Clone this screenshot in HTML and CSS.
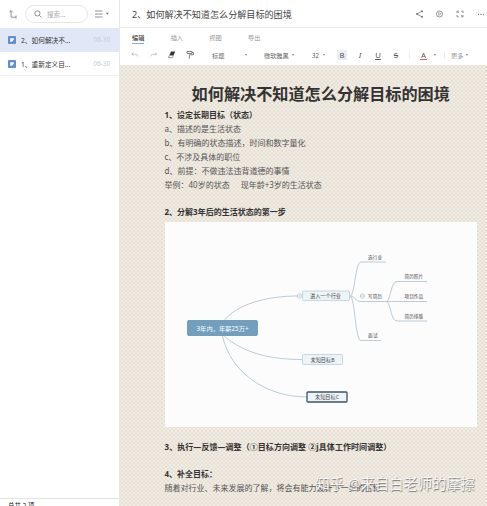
FILE: index.html
```html
<!DOCTYPE html>
<html>
<head>
<meta charset="utf-8">
<title>如何解决不知道怎么分解目标的困境</title>
<link rel="stylesheet" href="styles.css">
</head>
<body>
<div class="app">
  <aside class="sidebar">
    <div class="side-top">
      <svg class="tree" width="8" height="9" viewBox="0 0 8 9"><path d="M.4 2.2 2 .6l1.6 1.6M2 .8v6.4h5M7 5.6v3"/></svg>
      <div class="search">
        <svg width="8" height="8" viewBox="0 0 8 8"><circle cx="3.4" cy="3.4" r="2.6"/><path d="M5.4 5.4 7.4 7.4"/></svg>
        <span>搜索...</span>
      </div>
      <svg class="list" width="15" height="8" viewBox="0 0 15 8"><path d="M0 1h7.5M0 4h7.5M0 7h7.5"/><path class="fill" d="M10.8 2.8h3l-1.5 2z"/></svg>
    </div>
    <div class="note selected"><svg width="8" height="8" viewBox="0 0 8 8"><rect width="8" height="8" rx="1"/><path d="M2.2 2.2h3.6v1.5L4 5.8H2.2z"/></svg><span class="name">2、如何解决不...</span><span class="date">06-30</span></div>
    <div class="note"><svg width="8" height="8" viewBox="0 0 8 8"><rect width="8" height="8" rx="1"/><path d="M2.2 2.2h3.6v1.5L4 5.8H2.2z"/></svg><span class="name">1、重新定义目...</span><span class="date">06-30</span></div>
    <div class="total"><span>总共 2 项</span></div>
  </aside>
  <main class="editor">
    <header class="title-bar">
      <span class="doc-name">2、如何解决不知道怎么分解目标的困境</span>
      <svg class="actions" width="72" height="10" viewBox="0 0 72 10">
        <path d="M7 2.2 2 5l5 2.800"/><circle class="dot" cx="7" cy="2.2" r="1"/><circle class="dot" cx="2" cy="5" r="1"/><circle class="dot" cx="7" cy="7.8" r="1"/>
        <circle cx="24.500" cy="5" r="3"/><path class="thin" d="m23.600 3.500 2.500 1.500-2.500 1.500z"/>
        <path d="M42 4V2.200h1.800M46.200 2.200H48V4M48 6v1.800h-1.800M43.800 7.800H42V6M42.300 2.500l1.600 1.600M46.100 5.900l1.600 1.600"/>
        <circle class="dot" cx="63.500" cy="5.500" r=".65"/><circle class="dot" cx="66" cy="5.500" r=".65"/><circle class="dot" cx="68.500" cy="5.500" r=".65"/>
      </svg>
    </header>
    <nav class="tabs"><span class="active">编辑</span><span>插入</span><span>视图</span><span>导出</span></nav>
    <div class="toolbar">
      <svg class="tools" width="64" height="10" viewBox="0 0 64 10">
        <g class="pale"><path d="M2.500 2.500.7 4.200l2 1.300M.9 4.200h3.600q2 0 2.200 2.200M24 2.500l1.800 1.700-2 1.300M25.600 4.200H22q-2 0-2.200 2.200"/></g>
        <path class="dark" d="M40 1.500h4.200L42.500 5.500h-4.200z"/><path class="outline" d="m38.300 5.500-.9 2.200h3.800l1.300-2.200"/>
        <path class="mid" d="M56 1.500h5v2h-5zM61 2.500h1.400v2.300h-4v3.800"/>
      </svg>
      <span class="style">标题</span><i class="caret c1"></i>
      <span class="family">微软雅黑</span><i class="caret c2"></i>
      <span class="size">32</span><i class="caret c3"></i>
      <span class="fmt bold">B</span><span class="fmt italic">I</span><span class="fmt under">U</span><span class="fmt strike">S</span>
      <i class="divider"></i><span class="fmt color">A</span><i class="caret c4"></i><i class="divider d2"></i>
      <span class="more">更多</span><i class="caret c5"></i>
    </div>
    <article class="page">
      <h1>如何解决不知道怎么分解目标的困境</h1>
      <h2>1、设定长期目标（状态）</h2>
      <p>a、描述的是生活状态</p>
      <p>b、有明确的状态描述，时间和数字量化</p>
      <p>c、不涉及具体的职位</p>
      <p>d、前提：不做违法违背道德的事情</p>
      <p>举例：40岁的状态<span class="gap"></span>现年龄+3岁的生活状态</p>
      <h2 class="spaced">2、分解3年后的生活状态的第一步</h2>
      <svg class="map" width="312" height="205" viewBox="165 222 312 205">
        <g class="wire">
          <path d="M223 322C236 304 267 296 298 296M222 334C242 353 270 359.500 302 359.500M222 334C230 374 268 397 307 397"/>
          <path d="M350 296C355 296 355 262 361 262H386M350 296C355 296 355 301.500 361 301.500H387M350 296C355 296 355 340.500 361 340.500H381"/>
          <path d="M387 301.500C391 298 391 281.500 397 281.500H427M387 301.500H427M387 301.500C391 305 391 321 397 321H427"/>
        </g>
        <rect class="root" x="187" y="320" width="71" height="16" rx="2"/>
        <rect class="node" x="302.500" y="291" width="47" height="9.500" rx="1"/>
        <rect class="node" x="302.500" y="354.500" width="40" height="10" rx="1"/>
        <rect class="node current" x="307" y="392" width="40" height="10" rx="1"/>
        <circle class="knob" cx="299.500" cy="296" r="2.200"/><circle class="knob" cx="362.500" cy="296" r="2.200"/><path class="minus" d="M361.200 296h2.600M298.400 296h2.200"/>
        <text class="root-text" x="196.500" y="330.500" textLength="52">3年内，年薪25万+</text>
        <text x="310" y="298.200" textLength="31">进入一个行业</text>
        <text x="310.500" y="361.800" textLength="24">未知目标B</text>
        <text x="315" y="399.300" textLength="24">未知目标C</text>
        <g class="leaf">
          <text x="368" y="258.600" textLength="14">选行业</text><text x="368" y="298" textLength="14">写简历</text><text x="368" y="337.400" textLength="9.500">面试</text>
          <text x="404.500" y="278.200" textLength="18.500">简历照片</text><text x="404.500" y="297.800" textLength="18.500">项目作品</text><text x="404.500" y="317.600" textLength="18.500">简历排版</text>
        </g>
      </svg>
      <h2 class="after">3、执行—反馈—调整（①目标方向调整 ②j具体工作时间调整）</h2>
      <h2 class="last">4、补全目标：</h2>
      <p>随着对行业、未来发展的了解，将会有能力设计下一步的目标</p>
    </article>
    <div class="watermark">知乎 @来自白老师的摩擦</div>
  </main>
</div>
</body>
</html>
```
FILE: styles.css
```css
* { box-sizing: border-box; }
body { margin: 0; font-family: "Noto Sans", "Noto Sans CJK SC", sans-serif; color: #444; background: #fff; }
svg { display: block; flex: none; fill: none; stroke: #777; stroke-width: .8; }
.app { display: flex; width: 487px; height: 506px; overflow: hidden; }
.sidebar { display: flex; flex-direction: column; flex: none; width: 119px; background: #fff; }
.side-top { display: flex; align-items: center; flex: none; height: 28px; padding-left: 9px; }
.search { display: flex; align-items: center; gap: 5px; width: 63px; height: 18px; margin-left: 8px; padding-left: 8px; border: 1px solid #e6e6e6; border-radius: 9px; font-size: 6.5px; color: #aaa; }
.list { margin-left: 7px; }
.list .fill { fill: #777; stroke: none; }
.note { display: flex; align-items: center; flex: none; height: 24px; padding: 0 9px 0 8px; border-bottom: 1px solid #eee; font-size: 6.7px; color: #333; }
.note svg { stroke: none; }
.note rect { fill: #5c8fd6; }
.note path { fill: #fff; }
.note.selected { background: #e0e8f8; border-color: #e0e8f8; }
.name { margin-left: 5px; white-space: nowrap; }
.date { margin-left: auto; font-size: 6.3px; color: #c6cad2; }
.total { height: 8px; margin-top: auto; padding-left: 8px; overflow: hidden; border-top: 1px solid #dde3e6; font-size: 6.5px; line-height: 14px; color: #222; }
.editor { position: relative; display: flex; flex-direction: column; width: 368px; border-left: 1px solid #e8e8e8; }
.title-bar { display: flex; align-items: center; justify-content: space-between; flex: none; height: 28px; padding: 0 0 0 12px; border-bottom: 1px solid #e9e9e9; }
.doc-name { font-size: 9.1px; color: #444; white-space: nowrap; }
.actions .dot { fill: #777; stroke: none; }
.actions .thin { stroke-width: .5; }
.tabs { display: flex; gap: 26.3px; flex: none; height: 19px; padding: 3px 0 0 12px; font-size: 6.2px; line-height: 13px; color: #999; }
.tabs .active { height: 13px; border-bottom: 1px solid #8faec6; color: #444; font-weight: 500; }
.toolbar { display: flex; align-items: center; flex: none; height: 18px; padding: 0 0 2px 11px; font-size: 6.2px; color: #666; white-space: nowrap; }
.pale { stroke: #bbb; }
.dark { fill: #333; stroke: none; }
.outline { stroke: #555; stroke-width: .6; }
.mid { stroke: #666; }
.caret { flex: none; width: 0; border: 1.5px solid transparent; border-top: 2px solid #888; border-bottom: 0; }
.style { width: 13px; margin-left: 17px; }
.c1 { margin-left: 20px; }
.family { width: 25px; margin-left: 17px; }
.c2 { margin-left: 3px; }
.size { width: 8px; margin-left: 18px; }
.c3 { margin-left: 3px; }
.fmt { flex: none; width: 10px; height: 10px; font-size: 7.8px; line-height: 10px; text-align: center; color: #555; }
.bold { margin-left: 12px; background: #eaeef4; }
.italic { margin-left: 8px; font-style: italic; }
.under { margin-left: 8px; text-decoration: underline; }
.strike { margin-left: 8px; text-decoration: line-through; }
.divider { width: 1px; height: 7px; margin-left: 8px; background: #eee; }
.color { width: 7px; height: 9px; margin-left: 10px; line-height: 8px; border-bottom: 1px solid #c66; }
.c4 { margin-left: 7px; }
.d2 { margin-left: 8px; }
.more { width: 13px; margin-left: 6px; color: #999; }
.c5 { margin-left: 2px; }
.page { flex: 1; min-height: 0; padding: 18px 10px 0 44.500px; overflow: hidden; background-color: #f0ebe3; background-image: radial-gradient(circle, #e0d6ca .5px, transparent 1px), radial-gradient(circle, #e2dace .5px, transparent 1px); background-size: 4px 4px; background-position: 0 0, 2px 2px; color: #555; }
h1 { margin: 0 0 1.500px; height: 23px; font-size: 16.15px; line-height: 23px; text-align: center; color: #333; white-space: nowrap; }
h2, p { margin: 0; height: 14.100px; font-size: 8px; line-height: 14px; white-space: nowrap; }
h2 { color: #333; }
.gap { display: inline-block; width: 11px; }
.spaced { margin-top: 12.500px; }
.map { margin-top: 3px; background: #fcfcfc; }
.wire { stroke: #a9bfcd; stroke-width: .8; }
.root { fill: #739fbf; stroke: none; }
.node { fill: #edf4f8; stroke: #b0c8d6; stroke-width: .7; }
.current { stroke: #3d5368; stroke-width: 1.3; }
.knob { fill: #fcfcfc; stroke: #a9b8c2; stroke-width: .6; }
.minus { stroke: #999; stroke-width: .5; }
.map text { fill: #444; stroke: none; font-size: 5.2px; }
.map .root-text { fill: #fff; font-size: 6.2px; }
.map .leaf text { font-size: 4.6px; }
.after { margin-top: 13.500px; letter-spacing: .06px; }
.last { margin-top: 12.500px; }
.watermark { position: absolute; right: 12px; bottom: 12px; font-size: 14.3px; line-height: 20px; color: rgba(255, 255, 255, .9); text-shadow: .6px .6px 1px #777; white-space: nowrap; }
```
